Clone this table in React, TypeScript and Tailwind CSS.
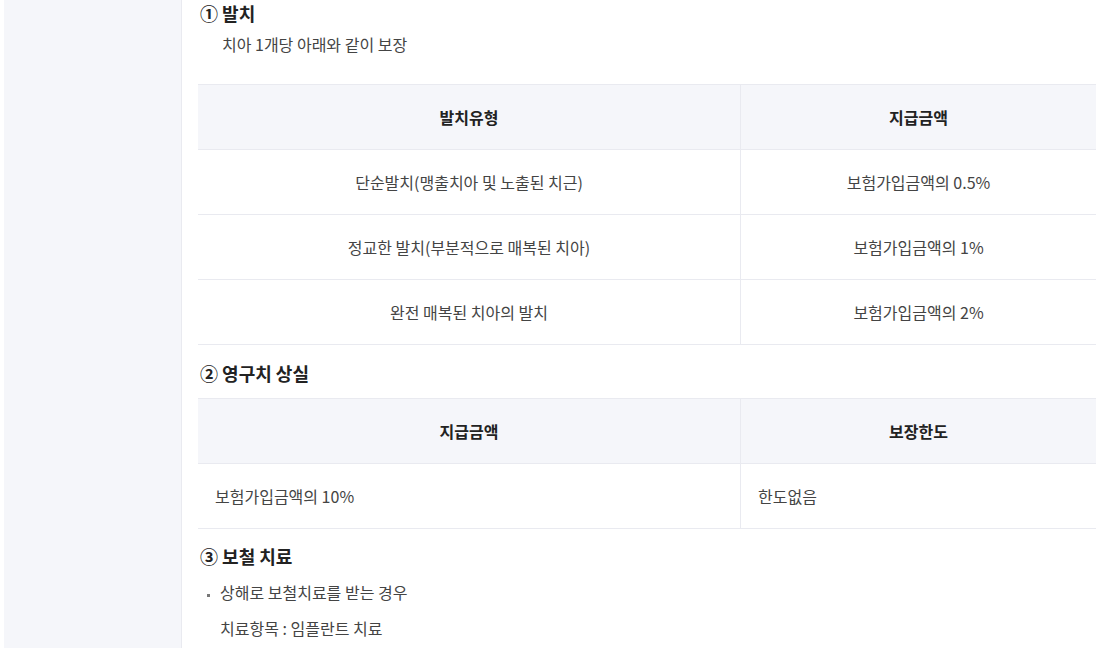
const font = {
  fontFamily: '"Noto Sans CJK KR", "Noto Sans", sans-serif',
};

const extraction = [
  ["단순발치(맹출치아 및 노출된 치근)", "보험가입금액의 0.5%"],
  ["정교한 발치(부분적으로 매복된 치아)", "보험가입금액의 1%"],
  ["완전 매복된 치아의 발치", "보험가입금액의 2%"],
];

function Title({ children }: { children: React.ReactNode }) {
  return (
    <h3 className="text-[18px] font-bold leading-[22px] text-[#222]">
      {children}
    </h3>
  );
}

function HeaderRow({ a, b }: { a: string; b: string }) {
  return (
    <div className="grid grid-cols-[542px_1fr] h-[65px] bg-[#f5f6fa] border-b border-[#e9eaf0] text-[16px] font-bold text-[#222]">
      <div className="flex items-center justify-center">{a}</div>
      <div className="flex items-center justify-center border-l border-[#e9eaf0]">{b}</div>
    </div>
  );
}

export default function App() {
  return (
    <div style={font} className="flex h-[648px] w-full overflow-hidden bg-white">
      <aside className="ml-[4px] w-[178px] shrink-0 bg-[#f5f6fa] border-r border-[#e9eaf0]" />
      <main className="flex-1 pl-[16px] text-[#444]">
        <div className="pl-[2px]">
          <h3 className="text-[18px] font-bold leading-[26px] text-[#222]">① 발치</h3>
        </div>
        <p className="mt-[8px] pl-[24px] text-[16px] leading-[20px] text-[#444]">
          치아 1개당 아래와 같이 보장
        </p>

        <div className="mt-[30px] border-t border-[#e9eaf0]">
          <HeaderRow a="발치유형" b="지급금액" />
          {extraction.map(([a, b]) => (
            <div
              key={a}
              className="grid grid-cols-[542px_1fr] h-[65px] border-b border-[#e9eaf0] text-[16px] text-[#444]"
            >
              <div className="flex items-center justify-center">{a}</div>
              <div className="flex items-center justify-center border-l border-[#e9eaf0]">{b}</div>
            </div>
          ))}
        </div>

        <div className="pl-[2px] mt-[17px]">
          <Title>② 영구치 상실</Title>
        </div>
        <div className="mt-[14px] border-t border-[#e9eaf0]">
          <HeaderRow a="지급금액" b="보장한도" />
          <div className="grid grid-cols-[542px_1fr] h-[65px] border-b border-[#e9eaf0] text-[16px] text-[#444]">
            <div className="flex items-center pl-[17px]">보험가입금액의 10%</div>
            <div className="flex items-center pl-[17px] border-l border-[#e9eaf0]">한도없음</div>
          </div>
        </div>

        <div className="pl-[2px] mt-[16px]">
          <Title>③ 보철 치료</Title>
        </div>
        <ul className="mt-[15px] pl-[9px] text-[16px] leading-[20px] text-[#444]">
          <li className="flex items-center">
            <span className="mt-[6px] mr-[10px] h-[3px] w-[3px] bg-[#777]" />
            상해로 보철치료를 받는 경우
          </li>
        </ul>
        <p className="mt-[16px] pl-[22px] text-[16px] leading-[20px] text-[#444]">
          치료항목 : 임플란트 치료
        </p>
      </main>
    </div>
  );
}
